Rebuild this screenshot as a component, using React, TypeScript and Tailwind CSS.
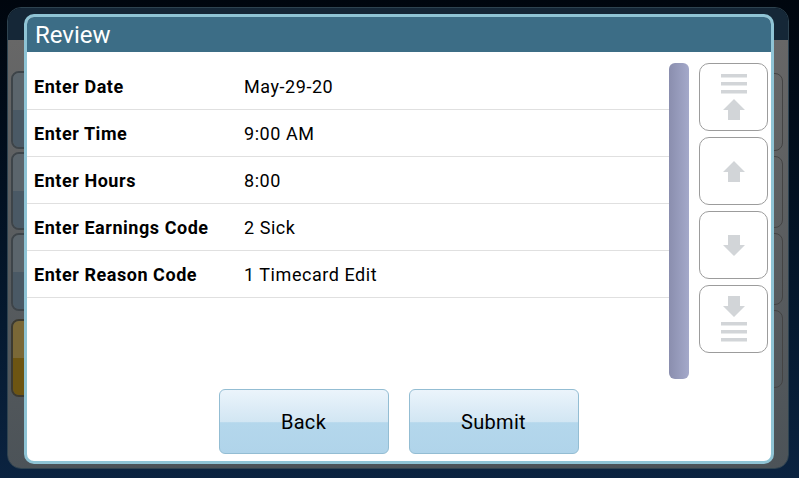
import React from 'react';

const rows = [
    { label: 'Enter Date', value: 'May-29-20' },
    { label: 'Enter Time', value: '9:00 AM' },
    { label: 'Enter Hours', value: '8:00' },
    { label: 'Enter Earnings Code', value: '2 Sick' },
    { label: 'Enter Reason Code', value: '1 Timecard Edit' },
];

const ICON = '#d2d5d8';

function Bars() {
    return (
        <svg width="26" height="20" viewBox="0 0 26 20">
            <rect x="0" y="0" width="26" height="3.5" fill={ICON} />
            <rect x="0" y="8" width="26" height="3.5" fill={ICON} />
            <rect x="0" y="16" width="26" height="3.5" fill={ICON} />
        </svg>
    );
}

function Arrow({ down = false }: { down?: boolean }) {
    return (
        <svg width="22" height="21" viewBox="0 0 22 21" className={down ? 'rotate-180' : ''}>
            <path d="M11 0 L22 11 L17 11 L17 21 L5 21 L5 11 L0 11 Z" fill={ICON} />
        </svg>
    );
}

function NavButton({ children }: { children: React.ReactNode }) {
    return (
        <button className="w-[69px] h-[68px] rounded-[10px] border border-[#9c9c9c] bg-white flex flex-col items-center justify-center gap-[5px]">
            {children}
        </button>
    );
}

function BgButton({ yellow = false }: { yellow?: boolean }) {
    return (
        <div
            className={
                'h-[78px] rounded-[8px] border-2 overflow-hidden flex flex-col ' +
                (yellow ? 'border-[#3c3a30]' : 'border-[#3d4449]')
            }
        >
            <div className={'flex-1 ' + (yellow ? 'bg-[#7a6837]' : 'bg-[#5b656c]')} />
            <div className={'flex-1 ' + (yellow ? 'bg-[#6d5512]' : 'bg-[#4a5965]')} />
        </div>
    );
}

export default function App() {
    return (
        <div
            className="relative w-[799px] h-[478px] overflow-hidden bg-gradient-to-b from-[#00060e] to-[#0b2340] pl-[7px] pr-[10px] pt-[7px] pb-[9px]"
            style={{ fontFamily: 'Roboto, "Liberation Sans", sans-serif' }}
        >
            {/* device panel underneath the dialog */}
            <div className="h-full rounded-[14px] border border-[#2e4350] overflow-hidden flex flex-col">
                <div className="h-[32px] bg-[#152737]" />
                <div className="flex-1 bg-gradient-to-b from-[#676767] to-[#4c5358] flex justify-between pt-[31px]">
                    <div className="w-[60px] pl-[3px] flex flex-col gap-[3px]">
                        <BgButton />
                        <BgButton />
                        <BgButton />
                        <div className="h-[2px]" />
                        <BgButton yellow />
                    </div>
                    <div className="w-[30px] pr-[5px] flex flex-col gap-[5px] pt-[2px]">
                        <div className="h-[78px] rounded-r-[8px] border border-[#444]" />
                        <div className="h-[72px] rounded-r-[8px] border border-[#444]" />
                        <div className="h-[72px] rounded-r-[8px] border border-[#444]" />
                        <div className="h-[78px] rounded-r-[8px] border border-[#444]" />
                    </div>
                </div>
            </div>

            {/* Review dialog */}
            <div className="absolute left-[24px] top-[14px] w-[750px] h-[450px] rounded-[10px] border-[3px] border-[#8fc4d5] bg-white overflow-hidden flex flex-col">
                <div className="h-[35px] bg-[#3c6d86] flex items-center pl-[8px] pt-[1px]">
                    <span className="text-white text-[24px] leading-none">Review</span>
                </div>
                <div className="flex-1 flex pt-[11px]">
                    <div className="w-[642px]">
                        {rows.map((row) => (
                            <div key={row.label} className="h-[47px] border-b border-[#e0e0e0] flex items-center pl-[7px] pt-[1px]">
                                <span className="w-[210px] font-bold text-[18px] tracking-[0.55px] text-black">{row.label}</span>
                                <span className="text-[18px] tracking-[0.55px] text-black">{row.value}</span>
                            </div>
                        ))}
                    </div>
                    <div className="w-[20px] h-[316px] rounded-[6px] bg-gradient-to-r from-[#8a8eae] to-[#a4a9ca]" />
                    <div className="ml-[10px] flex flex-col gap-[6px]">
                        <NavButton>
                            <Bars />
                            <Arrow />
                        </NavButton>
                        <NavButton>
                            <Arrow />
                        </NavButton>
                        <NavButton>
                            <Arrow down />
                        </NavButton>
                        <NavButton>
                            <Arrow down />
                            <Bars />
                        </NavButton>
                    </div>
                </div>
                <div className="h-[72px] flex justify-center gap-[20px] pb-[5px] pr-[1px]">
                    {['Back', 'Submit'].map((t) => (
                        <button
                            key={t}
                            className="w-[170px] h-[65px] rounded-[6px] border border-[#93bdd3] bg-[linear-gradient(to_bottom,#ebf4fb_0%,#d2e6f3_50%,#b4d7ec_52%,#b0d4ea_100%)] text-[20px] tracking-[0.3px] text-black"
                        >
                            {t}
                        </button>
                    ))}
                </div>
            </div>
        </div>
    );
}
